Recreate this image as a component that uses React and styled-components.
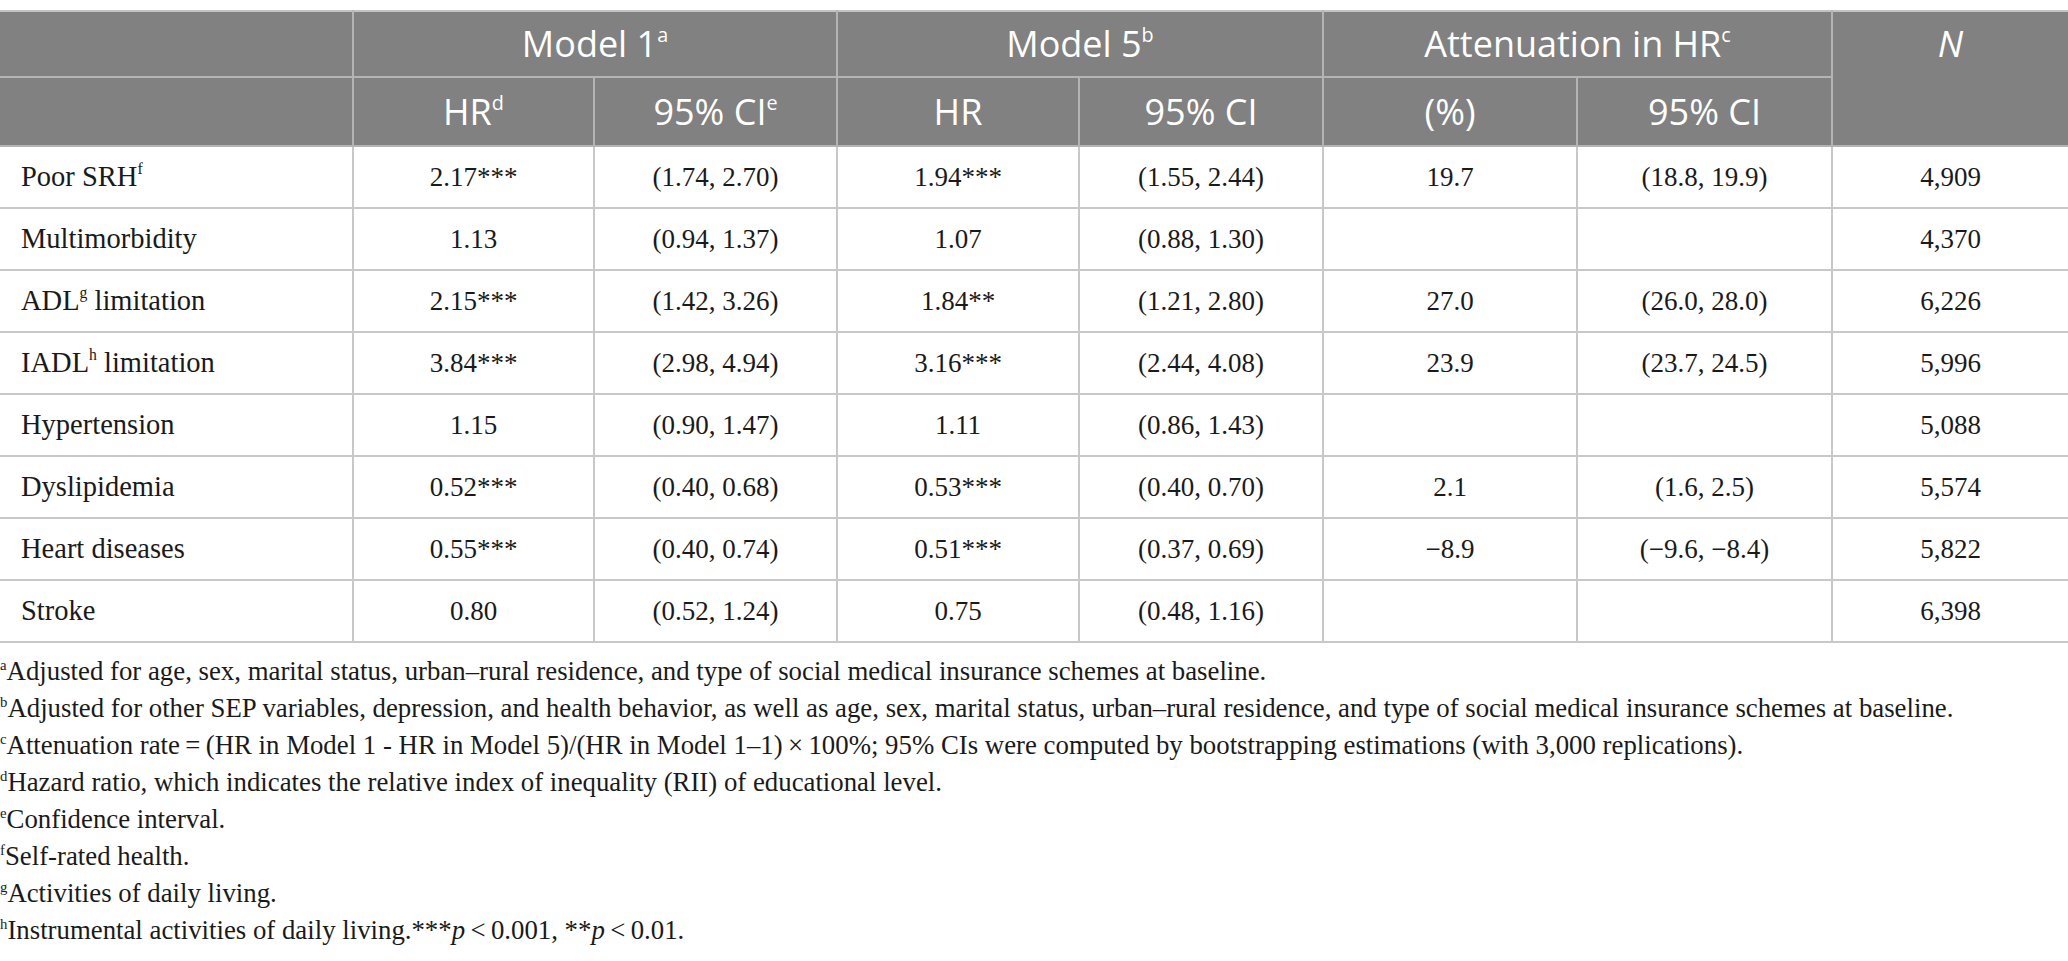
import React from 'react';
import styled, { createGlobalStyle } from 'styled-components';

const rows = [
  { label: 'Poor SRH', sup: 'f', hr1: '2.17***', ci1: '(1.74, 2.70)', hr5: '1.94***', ci5: '(1.55, 2.44)', att: '19.7', attCi: '(18.8, 19.9)', n: '4,909' },
  { label: 'Multimorbidity', hr1: '1.13', ci1: '(0.94, 1.37)', hr5: '1.07', ci5: '(0.88, 1.30)', att: '', attCi: '', n: '4,370' },
  { label: 'ADL', sup: 'g', rest: ' limitation', hr1: '2.15***', ci1: '(1.42, 3.26)', hr5: '1.84**', ci5: '(1.21, 2.80)', att: '27.0', attCi: '(26.0, 28.0)', n: '6,226' },
  { label: 'IADL', sup: 'h', rest: ' limitation', hr1: '3.84***', ci1: '(2.98, 4.94)', hr5: '3.16***', ci5: '(2.44, 4.08)', att: '23.9', attCi: '(23.7, 24.5)', n: '5,996' },
  { label: 'Hypertension', hr1: '1.15', ci1: '(0.90, 1.47)', hr5: '1.11', ci5: '(0.86, 1.43)', att: '', attCi: '', n: '5,088' },
  { label: 'Dyslipidemia', hr1: '0.52***', ci1: '(0.40, 0.68)', hr5: '0.53***', ci5: '(0.40, 0.70)', att: '2.1', attCi: '(1.6, 2.5)', n: '5,574' },
  { label: 'Heart diseases', hr1: '0.55***', ci1: '(0.40, 0.74)', hr5: '0.51***', ci5: '(0.37, 0.69)', att: '\u22128.9', attCi: '(\u22129.6, \u22128.4)', n: '5,822' },
  { label: 'Stroke', hr1: '0.80', ci1: '(0.52, 1.24)', hr5: '0.75', ci5: '(0.48, 1.16)', att: '', attCi: '', n: '6,398' },
];

const notes = [
  ['a', 'Adjusted for age, sex, marital status, urban\u2013rural residence, and type of social medical insurance schemes at baseline.'],
  ['b', 'Adjusted for other SEP variables, depression, and health behavior, as well as age, sex, marital status, urban\u2013rural residence, and type of social medical insurance schemes at baseline.'],
  ['c', 'Attenuation rate\u2009=\u2009(HR in Model 1 - HR in Model 5)/(HR in Model 1\u20131)\u2009\u00d7\u2009100%; 95% CIs were computed by bootstrapping estimations (with 3,000 replications).'],
  ['d', 'Hazard ratio, which indicates the relative index of inequality (RII) of educational level.'],
  ['e', 'Confidence interval.'],
  ['f', 'Self-rated health.'],
  ['g', 'Activities of daily living.'],
];

const widths = [353, 241, 243, 242, 244, 254, 255, 236];

function App() {
  return (
    <>
      <GlobalStyle />
      <Page>
        <Table>
          <colgroup>
            {widths.map((w, i) => (
              <col key={i} style={{ width: w }} />
            ))}
          </colgroup>
          <thead>
            <HeadRow $h={66}>
              <HeadCell />
              <HeadCell colSpan={2}>Model 1<Sup>a</Sup></HeadCell>
              <HeadCell colSpan={2}>Model 5<Sup>b</Sup></HeadCell>
              <HeadCell colSpan={2}>Attenuation in HR<Sup>c</Sup></HeadCell>
              <SpanCell rowSpan={2}><em>N</em></SpanCell>
            </HeadRow>
            <HeadRow $h={69}>
              <HeadCell />
              <HeadCell>HR<Sup>d</Sup></HeadCell>
              <HeadCell>95% CI<Sup>e</Sup></HeadCell>
              <HeadCell>HR</HeadCell>
              <HeadCell>95% CI</HeadCell>
              <HeadCell>(%)</HeadCell>
              <HeadCell>95% CI</HeadCell>
            </HeadRow>
          </thead>
          <tbody>
            {rows.map((r) => (
              <BodyRow key={r.label}>
                <LabelCell>
                  {r.label}
                  {r.sup && <Sup>{r.sup}</Sup>}
                  {r.rest}
                </LabelCell>
                <Cell>{r.hr1}</Cell>
                <Cell>{r.ci1}</Cell>
                <Cell>{r.hr5}</Cell>
                <Cell>{r.ci5}</Cell>
                <Cell>{r.att}</Cell>
                <Cell>{r.attCi}</Cell>
                <Cell>{r.n}</Cell>
              </BodyRow>
            ))}
          </tbody>
        </Table>
        <Notes>
          {notes.map(([k, t]) => (
            <Note key={k}>
              <NoteSup>{k}</NoteSup>
              {t}
            </Note>
          ))}
          <Note>
            <NoteSup>h</NoteSup>
            Instrumental activities of daily living.***<em>p</em>{'\u2009<\u2009'}0.001, **<em>p</em>{'\u2009<\u2009'}0.01.
          </Note>
        </Notes>
      </Page>
    </>
  );
}

export default App;

const GlobalStyle = createGlobalStyle`
  body {
    margin: 0;
    background: #ffffff;
  }
`;

const Page = styled.div`
  padding-top: 10px;
  width: 2068px;
`;

const Table = styled.table`
  width: 2068px;
  border-collapse: collapse;
  table-layout: fixed;
  border-top: 2px solid #c3c3c3;
  border-bottom: 2px solid #c3c3c3;
`;

const HeadRow = styled.tr`
  height: ${(p) => p.$h}px;
  background: #808180;
`;

const HeadCell = styled.th`
  padding: 0;
  color: #ffffff;
  font-family: 'Open Sans', sans-serif;
  font-weight: 400;
  font-size: 36px;
  line-height: 1;
  text-align: center;
  vertical-align: middle;
  border-left: 2px solid #b4b4b4;
  border-bottom: 2px solid #b4b4b4;

  &:first-child {
    border-left: none;
  }
`;

const SpanCell = styled(HeadCell)`
  vertical-align: top;
  line-height: 64px;

  em {
    font-style: italic;
  }
`;

const Sup = styled.sup`
  font-size: 0.55em;
  vertical-align: 0.75em;
  line-height: 0;
`;

const BodyRow = styled.tr`
  height: 62px;
`;

const Cell = styled.td`
  padding: 0;
  font-family: 'Liberation Serif', serif;
  font-size: 27px;
  color: #1a1a1a;
  text-align: center;
  vertical-align: middle;
  border-left: 2px solid #c8c8c8;
  border-bottom: 2px solid #c8c8c8;
`;

const LabelCell = styled(Cell)`
  text-align: left;
  padding-left: 21px;
  font-size: 28.5px;
  border-left: none;
`;

const Notes = styled.div`
  padding-top: 10px;
  font-family: 'Liberation Serif', serif;
  font-size: 26.8px;
  color: #1a1a1a;
`;

const Note = styled.div`
  line-height: 37px;
  white-space: nowrap;
`;

const NoteSup = styled.sup`
  font-size: 0.55em;
  vertical-align: 0.7em;
  line-height: 0;
`;
